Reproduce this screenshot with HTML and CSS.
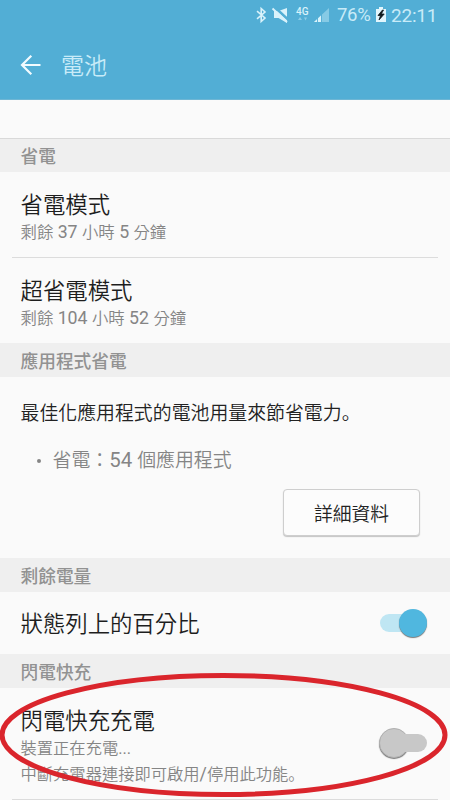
FILE: index.html
```html
<!DOCTYPE html>
<html lang="zh-Hant">
<head>
<meta charset="utf-8">
<title>電池</title>
<link rel="stylesheet" href="styles.css">
</head>
<body>
<div class="screen">
  <header class="top">
    <div class="status">
      <svg class="status-icons" width="82" height="30" viewBox="0 0 82 30">
        <path d="M2 11.2 10 18 6.2 21.5V8.5L10 12 2 18.8" fill="none" stroke="#d9f2fb" stroke-width="1.6"/>
        <path d="M19 11h4.500l8.500-3v15l-8.500-5H19z" fill="#d9f2fb"/>
        <path d="M19.500 7 33 19.500" stroke="#52aed5" stroke-width="2.400"/>
        <path d="M17.500 8.500 32 22" stroke="#d9f2fb" stroke-width="1.900"/>
        <text class="network" x="41" y="15">4G</text>
        <path d="M43 20l2-3 2 3zM49 17.500h3l-1.500 3z" fill="#8ccce6"/>
        <path d="M59 22 74 8v14z" fill="#86cae5"/>
        <path d="M59 22 66 15.500V22z" fill="#d9f2fb"/>
        <path d="M62.500 14v9M66.500 12v11" stroke="#52aed5" stroke-width=".9"/>
      </svg>
      <span class="percent">76%</span>
      <svg class="battery" width="12" height="16" viewBox="0 0 12 16">
        <path d="M4 0h4v2h3v13H1V2h3z" fill="#e2f6fd"/>
        <path d="M7.500 3 3 8.500h2.500L4 13l5.200-6H6.300L8.500 3z" fill="#101a1e" stroke="#101a1e" stroke-width=".8"/>
      </svg>
      <span class="clock">22:11</span>
    </div>
    <div class="bar">
      <svg width="22" height="22" viewBox="0 0 22 22" fill="none" stroke="#f2fbff" stroke-width="2.2"><path d="M11.3 1.700 2 11l9.300 9.300M2 11h18.500"/></svg>
      <h1>電池</h1>
    </div>
  </header>
  <main>
    <div class="gap"></div>
    <h2 class="lined">省電</h2>
    <div class="item mode">
      <div class="title">省電模式</div>
      <div class="sub">剩餘<b> 37 </b>小時<b> 5 </b>分鐘</div>
    </div>
    <hr>
    <div class="item mode">
      <div class="title">超省電模式</div>
      <div class="sub">剩餘<b> 104 </b>小時<b> 52 </b>分鐘</div>
    </div>
    <h2>應用程式省電</h2>
    <section class="apps">
      <p class="body">最佳化應用程式的電池用量來節省電力<span class="stop" lang="ja">。</span></p>
      <p class="bullet"><i></i><span>省電：<b>54 </b>個應用程式</span></p>
      <button>詳細資料</button>
    </section>
    <h2>剩餘電量</h2>
    <div class="item toggle-row">
      <div class="title">狀態列上的百分比</div>
      <span class="switch on"></span>
    </div>
    <h2>閃電快充</h2>
    <div class="item charge">
      <div>
        <div class="title">閃電快充充電</div>
        <div class="sub">裝置正在充電<span class="dots">...</span></div>
        <div class="sub">中斷充電器連接即可啟用<b>/</b>停用此功能<span class="stop" lang="ja">。</span></div>
      </div>
      <span class="switch off"></span>
    </div>
    <hr>
  </main>
  <svg class="marker" width="450" height="130" viewBox="0 0 450 130"><ellipse cx="223.500" cy="65" rx="221.500" ry="59.500" fill="none" stroke="#da252c" stroke-width="5"/></svg>
</div>
</body>
</html>
```
FILE: styles.css
```css
* { box-sizing: border-box; }
body, h1, h2, p { margin: 0; }
body {
  font-family: Roboto, "Noto Sans CJK TC", sans-serif;
  color: #222;
  background: #fafafa;
}
b { font-weight: 400; font-size: 1.08em; line-height: 1; }
.dots { font-weight: 400; }
.stop { font-family: "Noto Sans CJK JP", sans-serif; line-height: 1; }
.screen {
  position: relative;
  width: 450px;
  height: 800px;
  overflow: hidden;
  background: #fafafa;
}
.top { height: 100px; background: #52aed5; border-bottom: 1px solid #6fb6d4; }
.status {
  height: 30px;
  padding-right: 12px;
  display: flex;
  align-items: center;
  justify-content: flex-end;
  color: #c8ebf8;
  font-size: 19px;
  font-weight: 400;
}
.percent { width: 37px; font-size: 18.5px; letter-spacing: -0.3px; white-space: nowrap; }
.battery { margin: 0 4px 0 1px; }
.clock { width: 47px; letter-spacing: -0.2px; white-space: nowrap; }
.network { font: 500 10px Roboto, sans-serif; fill: #d9f2fb; }
.bar { height: 70px; padding-left: 20px; display: flex; align-items: center; }
.bar h1 {
  margin: 3px 0 0 19px;
  font-size: 23px;
  line-height: 32px;
  font-weight: 350;
  color: #c8ebf8;
}
.gap { height: 38px; }
h2 {
  height: 34px;
  padding-left: 20.5px;
  font-size: 17.7px;
  line-height: 38px;
  font-weight: 500;
  color: #929292;
  background: #efefef;
}
.lined { border-top: 1px solid #d9d9d9; line-height: 37px; }
.item { padding-left: 20.5px; }
.mode { height: 85px; padding-top: 17px; }
.title { font-size: 22.4px; line-height: 32px; font-weight: 350; color: #1e1e1e; }
.sub { height: 24px; font-size: 16.4px; line-height: 24px; font-weight: 350; color: #858585; }
hr { height: 1px; margin: 0 12px; border: 0; background: #dcdcdc; }
.apps { height: 181px; padding: 23px 30px 0 20.5px; display: flex; flex-direction: column; }
.body { height: 28px; font-size: 18.9px; line-height: 28px; font-weight: 350; }
.bullet {
  display: flex;
  align-items: center;
  height: 28px;
  margin-top: 19px;
  padding-left: 16px;
  font-size: 18.9px;
  line-height: 28px;
  font-weight: 350;
  color: #858585;
}
.bullet i { width: 4px; height: 4px; margin-right: 12px; border-radius: 50%; background: #858585; }
button {
  align-self: flex-end;
  width: 137px;
  height: 47px;
  margin-top: 14px;
  padding: 4px 0 0;
  border: 1px solid #cecece;
  border-radius: 4px;
  background: #fcfcfc;
  box-shadow: 0 1px 1px #c4c4c4;
  font: 350 18.8px/28px Roboto, "Noto Sans CJK TC", sans-serif;
  color: #222;
}
.toggle-row { height: 62px; padding-right: 22px; display: flex; align-items: center; justify-content: space-between; }
.toggle-row .title { padding-top: 2px; }
.switch { width: 48px; height: 30px; display: flex; align-items: center; }
.switch::before { content: ""; width: 47px; height: 18px; border-radius: 9px; }
.switch::after {
  content: "";
  flex: none;
  width: 28px;
  height: 28px;
  border-radius: 50%;
  box-shadow: 0 1px 1px #777;
}
.on::before { background: #bfe6f3; }
.on::after { margin-left: -28px; background: #50b7df; }
.off { flex-direction: row-reverse; }
.off::before { background: #c8c8c8; }
.off::after { margin-right: -28px; background: #c8c8c8; border: 1px solid #b0b0b0; }
.charge { height: 111px; padding: 17px 23px 0 20.5px; display: flex; justify-content: space-between; }
.charge .title { margin-bottom: -1px; }
.charge .sub { height: 26px; line-height: 26px; font-size: 16.3px; }
.charge .switch { margin-top: 23px; }
.marker { position: absolute; left: 0; top: 670px; }
```
